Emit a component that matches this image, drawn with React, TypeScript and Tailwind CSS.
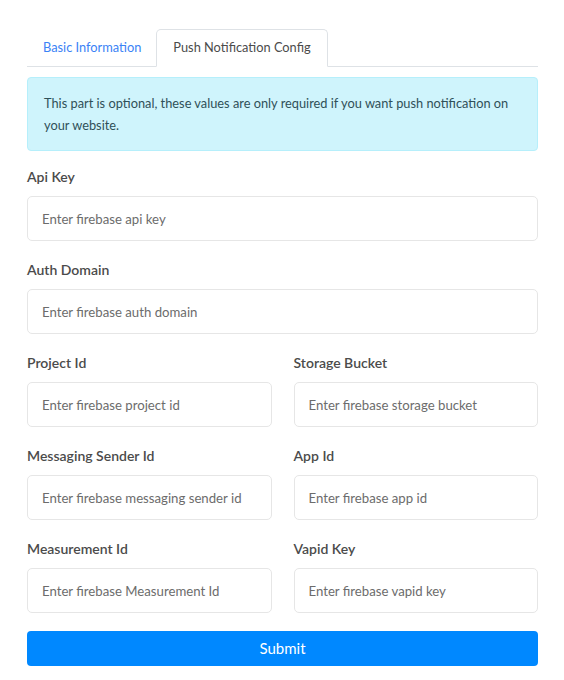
import React from 'react'

const fields: { label: string; placeholder: string }[][] = [
  [{ label: 'Api Key', placeholder: 'Enter firebase api key' }],
  [{ label: 'Auth Domain', placeholder: 'Enter firebase auth domain' }],
  [
    { label: 'Project Id', placeholder: 'Enter firebase project id' },
    { label: 'Storage Bucket', placeholder: 'Enter firebase storage bucket' },
  ],
  [
    { label: 'Messaging Sender Id', placeholder: 'Enter firebase messaging sender id' },
    { label: 'App Id', placeholder: 'Enter firebase app id' },
  ],
  [
    { label: 'Measurement Id', placeholder: 'Enter firebase Measurement Id' },
    { label: 'Vapid Key', placeholder: 'Enter firebase vapid key' },
  ],
]

function Field({ label, placeholder }: { label: string; placeholder: string }) {
  return (
    <div className="flex flex-col">
      <label className="text-[14px] leading-5 font-semibold text-[#4b4b4b] mb-[9px]">{label}</label>
      <input
        type="text"
        placeholder={placeholder}
        className="h-[45px] w-full rounded-[5px] border border-[#e6e6e6] bg-white px-[14px] text-[13.2px] text-[#444] placeholder:text-[#6c6c6c] outline-none"
      />
    </div>
  )
}

export default function App() {
  return (
    <div
      className="w-[564px] bg-white pl-[27px] pr-[26px] pt-[29px] pb-4"
      style={{ fontFamily: 'Lato, "Noto Sans", sans-serif' }}
    >
      {/* Tabs */}
      <div className="flex border-b border-[#dee2e6]">
        <button className="pl-4 pr-[15px] h-[37px] text-[12.8px] text-[#3b82f6]">
          Basic Information
        </button>
        <button className="-mb-px px-4 h-[38px] text-[12.8px] text-[#4b4b4b] bg-white border border-[#dee2e6] border-b-white rounded-t-[5px]">
          Push Notification Config
        </button>
      </div>

      {/* Info alert */}
      <div className="mt-[10px] rounded-[4px] border border-[#b6effb] bg-[#cff4fc] px-4 py-[14px] text-[12.8px] leading-[22px] text-[#2f5058]">
        This part is optional, these values are only required if you want push notification on your website.
      </div>

      <form className="mt-[16px] flex flex-col gap-[19px]" onSubmit={(e) => e.preventDefault()}>
        {fields.map((row, i) => (
          <div key={i} className={row.length > 1 ? 'grid grid-cols-2 gap-x-[22px]' : ''}>
            {row.map((f) => (
              <Field key={f.label} label={f.label} placeholder={f.placeholder} />
            ))}
          </div>
        ))}
        <button
          type="submit"
          className="-mt-px h-[35px] w-full rounded-[4px] bg-[#0088ff] text-[15px] text-white"
        >
          Submit
        </button>
      </form>
    </div>
  )
}
